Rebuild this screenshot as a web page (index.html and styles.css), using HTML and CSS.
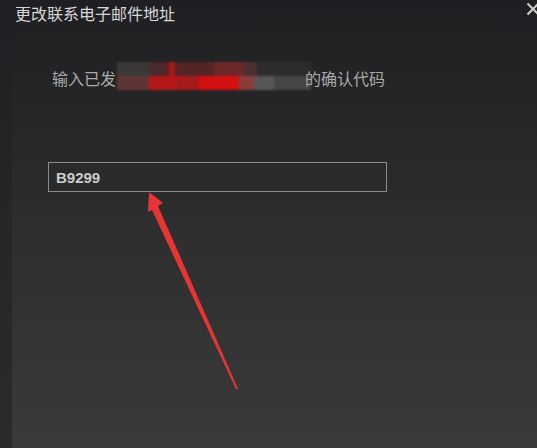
FILE: index.html
```html
<!DOCTYPE html>
<html lang="zh">
<head>
<meta charset="utf-8">
<title>更改联系电子邮件地址</title>
<link rel="stylesheet" href="styles.css">
</head>
<body>
<div class="window">
  <div class="strip"></div>
  <div class="panel">
    <div class="titlebar">
      <span class="title">更改联系电子邮件地址</span>
      <svg class="close" width="16" height="16" viewBox="0 0 16 16">
        <path d="M2.5 2.5 L13.5 13.5 M13.5 2.5 L2.5 13.5" stroke="#c9c9c9" stroke-width="2.2" fill="none"/>
      </svg>
    </div>
    <div class="content">
      <div class="instruction">
        <span>输入已发</span>
        <span class="mosaic"><span class="row r1"></span><span class="row r2"></span></span>
        <span>的确认代码</span>
      </div>
      <div class="field"><span class="code">B9299</span></div>
    </div>
  </div>
  <svg class="arrow" width="537" height="448" viewBox="0 0 537 448">
    <polygon points="149,192 163,203 158,206 238,389 236,389 152,210 148,212" fill="#e83434"/>
  </svg>
</div>
</body>
</html>
```

FILE: styles.css
```css
html, body {
  margin: 0;
  padding: 0;
  width: 537px;
  height: 448px;
  overflow: hidden;
}
body {
  font-family: "Noto Sans CJK SC", "Liberation Sans", sans-serif;
  background: #2c2c2d;
}
.window {
  position: relative;
  display: flex;
  width: 537px;
  height: 448px;
}
.strip {
  width: 12px;
  flex: none;
  background: linear-gradient(to bottom, #1e2023 0%, #242526 40%, #2b2b2b 100%);
}
.panel {
  flex: 1;
  display: flex;
  flex-direction: column;
  background: linear-gradient(to bottom, #1e1f22 0%, #262627 25%, #2f2f2f 55%, #3a3a3a 100%);
}
.titlebar {
  display: flex;
  justify-content: space-between;
  align-items: flex-start;
  height: 26px;
  padding-left: 3px;
}
.title {
  font-size: 16px;
  line-height: 26px;
  color: #d6d6d6;
}
.close {
  margin-top: 1px;
  margin-right: -4px;
}
.content {
  padding-left: 36px;
}
.instruction {
  display: flex;
  align-items: center;
  margin-top: 36px;
  padding-left: 4px;
  height: 28px;
  font-size: 16px;
  line-height: 20px;
  color: #a9a9a9;
}
.instruction > span:first-child,
.instruction > span:last-child {
  position: relative;
  top: 2px;
}
.mosaic {
  display: flex;
  flex-direction: column;
  width: 194px;
  height: 28px;
  margin-left: 1px;
  margin-right: -6px;
  filter: blur(1px);
}
.row {
  height: 14px;
}
.r1 {
  background: linear-gradient(to right,
    #3b3838 0, #3b3838 32px,
    #4a2a2a 32px, #4a2a2a 47px,
    #5e2222 47px, #5e2222 52px,
    #a01a1a 52px, #a01a1a 58px,
    #5e2222 58px, #5e2222 62px,
    #552525 62px, #552525 97px,
    #6e2828 97px, #6e2828 127px,
    #4a3030 127px, #4a3030 140px,
    #2c2c2c 140px, #2c2c2c 194px);
}
.r2 {
  background: linear-gradient(to right,
    #5e3434 0, #5e3434 32px,
    #b51818 32px, #b51818 60px,
    #a51a1a 60px, #a51a1a 82px,
    #d31010 82px, #d31010 122px,
    #8a3c3c 122px, #8a3c3c 137px,
    #575757 137px, #575757 157px,
    #464646 157px, #464646 194px);
}
.field {
  margin-top: 72px;
  width: 330px;
  height: 28px;
  border: 1px solid #8a8a8a;
  display: flex;
  align-items: center;
  padding-left: 7px;
  box-sizing: content-box;
}
.code {
  font-family: "Liberation Sans", sans-serif;
  font-weight: bold;
  font-size: 15px;
  color: #cccccc;
}
.arrow {
  position: absolute;
  left: 0;
  top: 0;
  pointer-events: none;
}
```
